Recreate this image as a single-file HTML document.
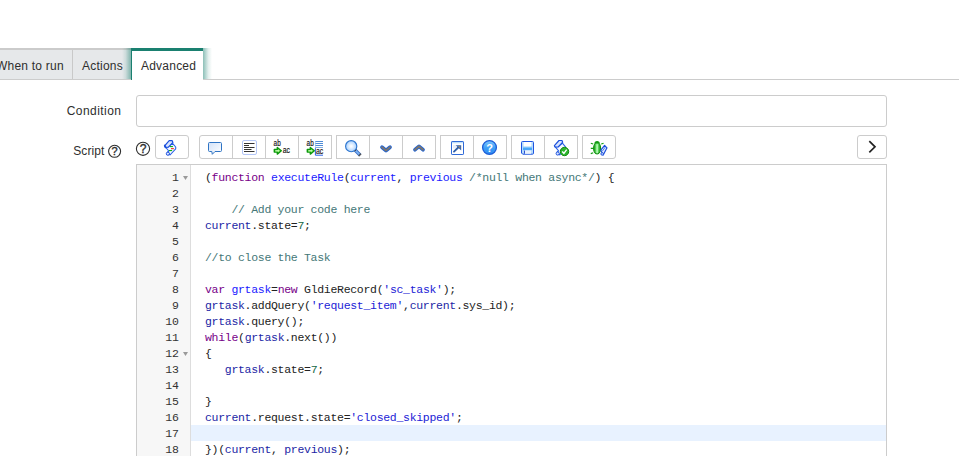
<!DOCTYPE html>
<html><head><meta charset="utf-8">
<style>
html,body{margin:0;padding:0;background:#fff;}
body{width:959px;height:456px;overflow:hidden;position:relative;font-family:"Liberation Sans",sans-serif;font-size:13px;color:#343d47;}
.abs{position:absolute;}
#tabline{left:0;top:79px;width:959px;height:1px;background:#ccc;}
.tab{position:absolute;top:48px;height:29px;background:#e6e8ea;border-top:2px solid #cbcbcb;line-height:32px;font-size:12px;letter-spacing:0.22px;color:#2e2e2e;white-space:nowrap;}
#t1{left:-20px;width:93px;}
#t1 i{position:absolute;right:0;top:0;width:1px;height:29px;background:#c9c9c9;}
#t1 span{position:absolute;left:16px;}
#t2{left:73px;width:58px;}
#t2 span{position:absolute;left:9px;}
#t3{left:131px;width:71px;background:#fff;border-top:3px solid #1a8070;border-left:1px solid #1a8070;height:29px;line-height:31px;}
.glowL{position:absolute;top:48px;height:31px;left:122px;width:9px;background:linear-gradient(to right,rgba(26,128,112,0),rgba(26,128,112,0.12) 40%,rgba(26,128,112,0.5));}
.glowR{position:absolute;top:48px;height:31px;left:203px;width:9px;background:linear-gradient(to left,rgba(26,128,112,0),rgba(26,128,112,0.12) 40%,rgba(26,128,112,0.5));}
#t3 span{position:absolute;left:9px;}
.lbl{position:absolute;text-align:right;width:121px;left:0;font-size:12px;letter-spacing:0.2px;color:#2e2e2e;}
#cond{left:136px;top:95px;width:749px;height:30px;border:1px solid #ccc;border-radius:3px;background:#fff;}
.btn{position:absolute;top:135px;height:22px;width:32px;border:1px solid #ccc;background:#fff;box-sizing:content-box;}
#editor{left:136px;top:164px;width:749px;height:300px;border:1px solid #ccc;background:#fff;overflow:hidden;}
#gutter{position:absolute;left:0;top:0;width:53px;height:300px;background:#f7f7f7;border-right:1px solid #ddd;}
.ln{position:absolute;left:0;width:41.5px;text-align:right;font-family:"Liberation Mono",monospace;font-size:11.5px;letter-spacing:-0.3px;line-height:16px;margin-top:1px;color:#333;height:16px;}
.cl{position:absolute;left:68px;font-family:"Liberation Mono",monospace;font-size:11.5px;letter-spacing:-0.3px;line-height:16px;margin-top:1px;height:16px;white-space:pre;color:#222;}
.kw{color:#708}.df{color:#1a1aff}.vr{color:#221fa5}.cm{color:#477}.st{color:#2222d6}.nm{color:#164}.v2{color:#221fa5}
#active{position:absolute;left:54px;top:260px;width:700px;height:16px;background:#e8f2ff;}
</style></head><body>
<div class="abs" id="tabline"></div>
<div class="tab" id="t1"><span>When to run</span><i></i></div>
<div class="tab" id="t2"><span>Actions</span></div>
<div class="glowL"></div><div class="glowR"></div>
<div class="tab" id="t3"><span>Advanced</span></div>

<div class="lbl" style="top:104px;letter-spacing:0.45px;width:121.5px">Condition</div>
<div class="abs" id="cond"></div>
<div class="lbl" style="top:144px;width:104.5px;letter-spacing:0.1px">Script</div>

<!--TB-->
<!-- script help icon -->
<svg class="abs" style="left:107px;top:144px" width="15" height="15" viewBox="0 0 15 15"><circle cx="7.6" cy="7.3" r="6" fill="none" stroke="#2e2e2e" stroke-width="1.1"/><text x="7.6" y="11.2" font-family="Liberation Sans, sans-serif" font-size="11" stroke="#2e2e2e" stroke-width="0.35" text-anchor="middle" fill="#2e2e2e">?</text></svg>
<svg class="abs" style="left:135px;top:141px" width="16" height="16" viewBox="0 0 16 16"><circle cx="8" cy="7.8" r="6.6" fill="none" stroke="#2e2e2e" stroke-width="1.1"/><text x="8" y="12.1" font-family="Liberation Sans, sans-serif" font-size="12" stroke="#2e2e2e" stroke-width="0.35" text-anchor="middle" fill="#2e2e2e">?</text></svg>

<div class="btn" style="left:155px;border-radius:3px"></div>
<div class="btn" style="left:199px;border-radius:3px 0 0 3px"></div>
<div class="btn" style="left:232px"></div>
<div class="btn" style="left:265px"></div>
<div class="btn" style="left:298px"></div>
<div class="btn" style="left:336px"></div>
<div class="btn" style="left:369px"></div>
<div class="btn" style="left:402px"></div>
<div class="btn" style="left:440px"></div>
<div class="btn" style="left:473px"></div>
<div class="btn" style="left:511px"></div>
<div class="btn" style="left:544px"></div>
<div class="btn" style="left:582px;border-radius:0 3px 3px 0"></div>
<div class="btn" style="left:857px;width:28px;border-radius:3px"></div>

<!-- chevron right -->
<svg class="abs" style="left:865px;top:139px" width="14" height="16" viewBox="0 0 14 16"><path d="M4.3 2.2 L10 7.8 L4.3 13.4" fill="none" stroke="#222" stroke-width="1.7"/></svg>
<!--/TB-->
<!--IC-->
<svg class="abs" style="left:0;top:0" width="959" height="456" viewBox="0 0 959 456">
<defs>
<linearGradient id="gb" x1="0" y1="0" x2="1" y2="1"><stop offset="0" stop-color="#d3e2f8"/><stop offset="1" stop-color="#ffffff"/></linearGradient>
<radialGradient id="gl" cx="0.5" cy="0.5" r="0.5"><stop offset="0" stop-color="#ffffff"/><stop offset="0.25" stop-color="#eef6ff"/><stop offset="1" stop-color="#a6d0ff"/></radialGradient>
<linearGradient id="gh" x1="0" y1="0" x2="0" y2="1"><stop offset="0" stop-color="#7cc6ff"/><stop offset="0.55" stop-color="#3d9ef6"/><stop offset="1" stop-color="#2f8af2"/></linearGradient>
<linearGradient id="gg" x1="0" y1="0" x2="1" y2="0"><stop offset="0" stop-color="#0c920c"/><stop offset="0.45" stop-color="#7df07d"/><stop offset="0.55" stop-color="#7df07d"/><stop offset="1" stop-color="#0c920c"/></linearGradient>


</defs>

<!-- 1 scroll w/ dashes -->
<g transform="translate(164,140)">
 <path d="M8.6 3.4 L11.7 7 L11.7 8.8 L6 15 L3.4 12.2 L4.8 11 L0.8 6.4 L4.4 6.6 Z" fill="#f4f7ff" stroke="#2b63e6" stroke-width="1.1" stroke-linejoin="round"/>
 <path d="M0.6 5.8 L5.2 0.7 L8.2 0.7 L8.9 2.4 L4.4 7.2 L1.5 7.4 Z" fill="#d7e4ff" stroke="#1b4fdc" stroke-width="1.2" stroke-linejoin="round"/>
 <circle cx="3.9" cy="13.7" r="1.6" fill="#d7e4ff" stroke="#1b4fdc" stroke-width="1"/>
 <path d="M0.7 5.4 L1.6 7.3" stroke="#1b4fdc" stroke-width="1.7" stroke-linecap="round"/>
 <rect x="6" y="6" width="2.9" height="1.1" fill="#12b012"/>
 <rect x="7" y="8.1" width="2.9" height="1.1" fill="#f0381a"/>
 <rect x="5" y="10" width="3.1" height="1.1" fill="#12b012"/>
</g>

<!-- 2 comment -->
<path d="M209.5 142.5 h11 a1 1 0 0 1 1 1 v7 a1 1 0 0 1 -1 1 h-5.5 l-2.7 2.8 l-0.5 -2.8 h-2.3 a1 1 0 0 1 -1 -1 v-7 a1 1 0 0 1 1 -1 z" fill="url(#gb)" stroke="#2f74c4" stroke-width="1"/>

<!-- 3 format -->
<rect x="242.5" y="140.5" width="14" height="14" rx="1.5" fill="#fff" stroke="#b3c6f7" stroke-width="1"/>
<g fill="#333"><rect x="244" y="143" width="10.5" height="1"/><rect x="244" y="145" width="5" height="1"/><rect x="244" y="147" width="10.5" height="1"/><rect x="244" y="149" width="7.5" height="1"/><rect x="244" y="151" width="10.5" height="1"/></g>

<!-- 4 replace -->
<text transform="translate(273.6,145.8) scale(0.8,1.08)" font-family="Liberation Sans, sans-serif" font-size="8" fill="#111" stroke="#111" stroke-width="0.15">ab</text>
<g transform="translate(273.6,146.8)"><path d="M0.7 2.7 L3.7 2.7 L3.7 0.7 L7.7 4 L3.7 7.3 L3.7 5.3 L0.7 5.3 Z" fill="#8cf066" stroke="#0b970b" stroke-width="1.4" stroke-linejoin="round"/><path d="M2 4 H5.6" stroke="#d9ffd0" stroke-width="0.9"/></g>
<text transform="translate(282.7,152.8) scale(0.72,1)" font-family="Liberation Sans, sans-serif" font-size="9.6" fill="#111" stroke="#111" stroke-width="0.15">ac</text>

<!-- 5 replace all -->
<text transform="translate(306.6,145.8) scale(0.8,1.08)" font-family="Liberation Sans, sans-serif" font-size="8" fill="#111" stroke="#111" stroke-width="0.15">ab</text>
<g transform="translate(306.6,146.8)"><path d="M0.7 2.7 L3.7 2.7 L3.7 0.7 L7.7 4 L3.7 7.3 L3.7 5.3 L0.7 5.3 Z" fill="#8cf066" stroke="#0b970b" stroke-width="1.4" stroke-linejoin="round"/><path d="M2 4 H5.6" stroke="#d9ffd0" stroke-width="0.9"/></g>
<g fill="#4f8cd6"><rect x="315" y="141" width="8" height="1"/><rect x="315" y="143" width="8" height="1"/><rect x="315" y="145" width="8" height="1"/><rect x="315" y="147" width="8" height="0.7"/><rect x="315" y="141" width="0.6" height="6.6" fill="#9cc0ee"/></g>
<path d="M315.4 148.2 V155.2 H323" fill="none" stroke="#2b63e6" stroke-width="1"/>
<text transform="translate(315.9,153.7) scale(0.72,1)" font-family="Liberation Sans, sans-serif" font-size="9.6" fill="#111" stroke="#111" stroke-width="0.15">ac</text>

<!-- 6 search -->
<path d="M355.3 150.3 L360.2 155.2" stroke="#3a6fc8" stroke-width="3.4" stroke-linecap="butt"/>
<path d="M355.6 150.6 L359.6 154.6" stroke="#7db4f5" stroke-width="1.6" stroke-linecap="butt"/>
<path d="M359.3 154.3 L360.4 155.4" stroke="#555" stroke-width="3.2" stroke-linecap="butt"/>
<circle cx="351.2" cy="146.2" r="5.6" fill="url(#gl)" stroke="#2f76cf" stroke-width="1.15"/>
<path d="M354.6 151.4 L356.4 149.6" stroke="#4a4a4a" stroke-width="1" fill="none"/>

<!-- 7 down -->
<path d="M382 147.2 L386 150.5 L390 147.2" fill="none" stroke="#1f63d4" stroke-width="3.7" stroke-linejoin="round" stroke-linecap="round"/>
<path d="M382 147.2 L386 150.5 L390 147.2" fill="none" stroke="#7a7570" stroke-width="2" stroke-linejoin="round" stroke-linecap="round"/>
<!-- 8 up -->
<path d="M415 149.7 L419 146.3 L423 149.7" fill="none" stroke="#1f63d4" stroke-width="3.7" stroke-linejoin="round" stroke-linecap="round"/>
<path d="M415 149.7 L419 146.3 L423 149.7" fill="none" stroke="#7a7570" stroke-width="2" stroke-linejoin="round" stroke-linecap="round"/>

<!-- 9 popup -->
<rect x="451.5" y="141.5" width="12" height="13" rx="0.6" fill="#fff" stroke="#2f6ad8" stroke-width="1"/>
<rect x="452" y="142" width="11" height="1.3" fill="#bfe0fa"/>
<rect x="453" y="145" width="3.4" height="3.4" fill="#e6eefa"/>
<path d="M454 151.6 L459 146.8" stroke="#2f5fa8" stroke-width="1.9" fill="none" stroke-linecap="round"/>
<path d="M455.7 145.2 L461.2 145.2 L461.2 150.4 Z" fill="#2f5fa8"/>
<path d="M457.6 146 L460.4 146 L460.4 148.8 Z" fill="#8a8078"/>

<!-- 10 help -->
<circle cx="489.5" cy="147.5" r="6.9" fill="url(#gh)" stroke="#1c5cd8" stroke-width="1.3"/>
<text x="489.6" y="151.6" font-family="Liberation Sans, sans-serif" font-size="11" font-weight="bold" text-anchor="middle" fill="#fff">?</text>

<!-- 11 save -->
<path d="M521.5 142.5 a1 1 0 0 1 1 -1 h10 a1 1 0 0 1 1 1 v10.7 a1 1 0 0 1 -1 1 h-9.8 l-1.2 -1.2 z" fill="#b5dbfd" stroke="#1f55e0" stroke-width="1"/>
<rect x="523.6" y="142" width="7.8" height="5" fill="#ffffff"/>
<rect x="523" y="146.8" width="9" height="3.3" fill="#4aa8f8"/>
<rect x="523" y="146.8" width="9" height="1" fill="#8ccafc"/>
<rect x="524" y="150.5" width="7" height="3.3" fill="#eaf2fd"/>
<rect x="524" y="150.5" width="1" height="3.3" fill="#2a50d0"/>

<!-- 12 check script -->
<g transform="translate(553.8,139.8)"><path d="M8.6 3.4 L11.7 7 L11.7 8.8 L6 15 L3.4 12.2 L4.8 11 L0.8 6.4 L4.4 6.6 Z" fill="#f4f7ff" stroke="#2b63e6" stroke-width="1.1" stroke-linejoin="round"/>
 <path d="M0.6 5.8 L5.2 0.7 L8.2 0.7 L8.9 2.4 L4.4 7.2 L1.5 7.4 Z" fill="#d7e4ff" stroke="#1b4fdc" stroke-width="1.2" stroke-linejoin="round"/>
 <circle cx="3.9" cy="13.7" r="1.6" fill="#d7e4ff" stroke="#1b4fdc" stroke-width="1"/></g>
<circle cx="564.5" cy="151.5" r="4.2" fill="#2db42d" stroke="#0f8a0f" stroke-width="1"/>
<path d="M562.2 151.5 L563.9 153.3 L566.7 149.6" fill="none" stroke="#fff" stroke-width="1.4"/>

<!-- 13 debug -->
<g stroke="#14a014" stroke-width="1.2" fill="none"><path d="M590.8 143.2 l2.4 0.8 M590.8 148.4 h2.4 M590.8 153.6 l2.4 -0.8 M603.6 143.2 l-2.4 0.8"/></g>
<ellipse cx="597.1" cy="148.2" rx="3.5" ry="5.7" fill="url(#gg)" stroke="#0c8a0c" stroke-width="1.1"/>
<path d="M594.4 143.6 a2.7 2.6 0 0 1 5.4 0 z" fill="#129a12"/>
<path d="M597.1 144.4 V153.4" stroke="#f0fff0" stroke-width="0.7"/>
<path d="M600.8 150.2 L604.6 145.4 L607 147.8 L603.2 155 Z" fill="#e4edff" stroke="#1b4fdc" stroke-width="1.2" stroke-linejoin="round"/>
<path d="M602.3 151.2 L605.2 147.2" stroke="#3f74ee" stroke-width="0.9"/>
<circle cx="602.2" cy="153.9" r="1.3" fill="#d7e4ff" stroke="#1b4fdc" stroke-width="1"/>
</svg>
<!--/IC-->
<div class="abs" id="editor">
<div id="gutter"></div>
<div id="active"></div>
<svg style="position:absolute;left:46px;top:11px" width="5" height="4" viewBox="0 0 5 4"><path d="M0 0 H5 L2.5 4 Z" fill="#9a9a9a"/></svg>
<svg style="position:absolute;left:46px;top:187px" width="5" height="4" viewBox="0 0 5 4"><path d="M0 0 H5 L2.5 4 Z" fill="#9a9a9a"/></svg>
<div class="ln" style="top:4px">1</div>
<div class="cl" style="top:4px">(<span class="kw">function</span> <span class="df">executeRule</span>(<span class="df">current</span>, <span class="df">previous</span> <span class="cm">/*null when async*/</span>) {</div>
<div class="ln" style="top:20px">2</div>
<div class="ln" style="top:36px">3</div>
<div class="cl" style="top:36px">    <span class="cm">// Add your code here</span></div>
<div class="ln" style="top:52px">4</div>
<div class="cl" style="top:52px"><span class="v2">current</span>.state=<span class="nm">7</span>;</div>
<div class="ln" style="top:68px">5</div>
<div class="ln" style="top:84px">6</div>
<div class="cl" style="top:84px"><span class="cm">//to close the Task</span></div>
<div class="ln" style="top:100px">7</div>
<div class="ln" style="top:116px">8</div>
<div class="cl" style="top:116px"><span class="kw">var</span> <span class="df">grtask</span>=<span class="kw">new</span> GldieRecord(<span class="st">'sc_task'</span>);</div>
<div class="ln" style="top:132px">9</div>
<div class="cl" style="top:132px"><span class="vr">grtask</span>.addQuery(<span class="st">'request_item'</span>,<span class="v2">current</span>.sys_id);</div>
<div class="ln" style="top:148px">10</div>
<div class="cl" style="top:148px"><span class="vr">grtask</span>.query();</div>
<div class="ln" style="top:164px">11</div>
<div class="cl" style="top:164px"><span class="kw">while</span>(<span class="vr">grtask</span>.next())</div>
<div class="ln" style="top:180px">12</div>
<div class="cl" style="top:180px">{</div>
<div class="ln" style="top:196px">13</div>
<div class="cl" style="top:196px">   <span class="vr">grtask</span>.state=<span class="nm">7</span>;</div>
<div class="ln" style="top:212px">14</div>
<div class="ln" style="top:228px">15</div>
<div class="cl" style="top:228px">}</div>
<div class="ln" style="top:244px">16</div>
<div class="cl" style="top:244px"><span class="v2">current</span>.request.state=<span class="st">'closed_skipped'</span>;</div>
<div class="ln" style="top:260px">17</div>
<div class="ln" style="top:276px">18</div>
<div class="cl" style="top:276px">})(<span class="v2">current</span>, <span class="v2">previous</span>);</div>
</div>
</body></html>
